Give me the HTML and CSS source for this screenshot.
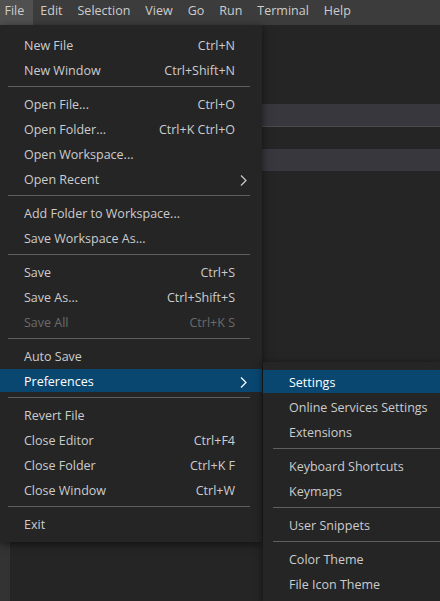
FILE: index.html
```html
<!DOCTYPE html>
<html lang="en">
<head>
    <meta charset="UTF-8">
    <title>File menu</title>
    <link rel="stylesheet" href="styles.css">
</head>
<body>
    <div class="window">
        <!-- title bar menus -->
        <div class="menubar">
            <div class="mb-item active">File</div>
            <div class="mb-item">Edit</div>
            <div class="mb-item">Selection</div>
            <div class="mb-item">View</div>
            <div class="mb-item">Go</div>
            <div class="mb-item">Run</div>
            <div class="mb-item">Terminal</div>
            <div class="mb-item">Help</div>
        </div>

        <div class="workbench">
            <div class="activitybar"></div>
            <div class="sidebar">
                <div class="row selected"></div>
                <div class="row"></div>
                <div class="row selected plain"></div>
            </div>
        </div>

        <!-- File dropdown -->
        <div class="menu file-menu">
            <div class="item"><span class="label">New File</span><span class="key">Ctrl+N</span><span class="arrow"></span></div>
            <div class="item"><span class="label">New Window</span><span class="key">Ctrl+Shift+N</span><span class="arrow"></span></div>
            <div class="sep"></div>
            <div class="item"><span class="label">Open File...</span><span class="key">Ctrl+O</span><span class="arrow"></span></div>
            <div class="item"><span class="label">Open Folder...</span><span class="key">Ctrl+K Ctrl+O</span><span class="arrow"></span></div>
            <div class="item"><span class="label">Open Workspace...</span><span class="key"></span><span class="arrow"></span></div>
            <div class="item"><span class="label">Open Recent</span><span class="key"></span>
                <span class="arrow"><svg width="7" height="11" viewBox="0 0 7 11"><path d="M1 0.5 L6 5.5 L1 10.5" fill="none" stroke="currentColor" stroke-width="1.2"/></svg></span>
            </div>
            <div class="sep"></div>
            <div class="item"><span class="label">Add Folder to Workspace...</span><span class="key"></span><span class="arrow"></span></div>
            <div class="item"><span class="label">Save Workspace As...</span><span class="key"></span><span class="arrow"></span></div>
            <div class="sep"></div>
            <div class="item"><span class="label">Save</span><span class="key">Ctrl+S</span><span class="arrow"></span></div>
            <div class="item"><span class="label">Save As...</span><span class="key">Ctrl+Shift+S</span><span class="arrow"></span></div>
            <div class="item disabled"><span class="label">Save All</span><span class="key">Ctrl+K S</span><span class="arrow"></span></div>
            <div class="sep"></div>
            <div class="item"><span class="label">Auto Save</span><span class="key"></span><span class="arrow"></span></div>
            <div class="item focused"><span class="label">Preferences</span><span class="key"></span>
                <span class="arrow"><svg width="7" height="11" viewBox="0 0 7 11"><path d="M1 0.5 L6 5.5 L1 10.5" fill="none" stroke="currentColor" stroke-width="1.2"/></svg></span>
            </div>
            <div class="sep"></div>
            <div class="item"><span class="label">Revert File</span><span class="key"></span><span class="arrow"></span></div>
            <div class="item"><span class="label">Close Editor</span><span class="key">Ctrl+F4</span><span class="arrow"></span></div>
            <div class="item"><span class="label">Close Folder</span><span class="key">Ctrl+K F</span><span class="arrow"></span></div>
            <div class="item"><span class="label">Close Window</span><span class="key">Ctrl+W</span><span class="arrow"></span></div>
            <div class="sep"></div>
            <div class="item"><span class="label">Exit</span><span class="key"></span><span class="arrow"></span></div>
        </div>

        <!-- Preferences submenu -->
        <div class="menu sub-menu">
            <div class="item focused"><span class="label">Settings</span></div>
            <div class="item"><span class="label">Online Services Settings</span></div>
            <div class="item"><span class="label">Extensions</span></div>
            <div class="sep"></div>
            <div class="item"><span class="label">Keyboard Shortcuts</span></div>
            <div class="item"><span class="label">Keymaps</span></div>
            <div class="sep"></div>
            <div class="item"><span class="label">User Snippets</span></div>
            <div class="sep"></div>
            <div class="item"><span class="label">Color Theme</span></div>
            <div class="item"><span class="label">File Icon Theme</span></div>
        </div>
    </div>
</body>
</html>
```

FILE: styles.css
```css
html, body {
    margin: 0;
    height: 100%;
    overflow: hidden;
}
body {
    background-color: #252526;
    font-family: "Open Sans", "Noto Sans", sans-serif;
    font-size: 12.5px;
    color: #cccccc;
}

.window {
    position: relative;
    height: 100%;
    display: flex;
    flex-direction: column;
}

/* title bar */
.menubar {
    display: flex;
    height: 25px;
    background-color: #3c3c3c;
    margin-left: -3px;
    flex: none;
}
.mb-item {
    height: 25px;
    line-height: 21px;
    padding: 0 7.5px;
}
.mb-item.active {
    background-color: #505050;
    padding-right: 8.5px;
}

/* behind the menus */
.workbench {
    flex: 1;
    display: flex;
}
.activitybar {
    width: 10px;
    background-color: #333333;
}
.sidebar {
    flex: 1;
    background-color: #252526;
    padding-top: 79px;
}
.row {
    height: 22px;
}
.row.selected {
    background-color: #37373d;
    border-bottom: 1px solid #4b4b4b;
}
.row.plain {
    border-bottom: 0;
}

/* menus */
.menu {
    position: absolute;
    display: flex;
    flex-direction: column;
    background-color: #252526;
    box-shadow: 0 2px 8px rgba(0, 0, 0, 0.55);
    padding: 7px 0 6px;
}
.file-menu {
    top: 25px;
    left: 0;
    width: 262px;
    z-index: 2;
}
.sub-menu {
    top: 362px;
    left: 263px;
    width: 177px;
    z-index: 3;
}

.item {
    display: grid;
    grid-template-columns: 1fr auto 12px;
    height: 23px;
    line-height: 25px;
    margin: 1px 0;
    padding: 0 15px 0 24px;
    white-space: nowrap;
    flex: none;
}
.sub-menu .item {
    display: block;
    padding-left: 26px;
}
.item.focused {
    background-color: #094771;
    color: #ffffff;
}
.item.disabled {
    color: #6b6b6b;
}
.arrow {
    display: flex;
    justify-content: flex-end;
    align-items: center;
}
.arrow svg {
    display: block;
    margin-top: 2px;
}

.sep {
    height: 1px;
    margin: 4px 12px 4px 8px;
    background-color: #606060;
    flex: none;
}
.sub-menu .sep {
    margin: 4px 0 4px 10px;
}
```
